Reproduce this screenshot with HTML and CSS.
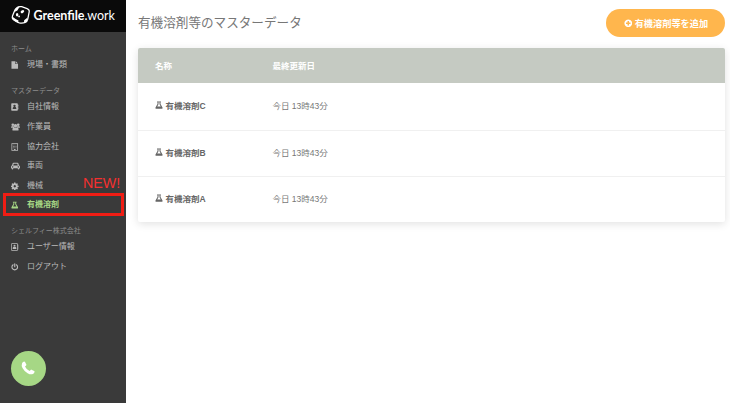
FILE: index.html
```
<!DOCTYPE html>
<html lang="ja">
<head>
	<meta charset="utf-8">
	<title>有機溶剤等のマスターデータ</title>
	<link rel="stylesheet" href="styles.css">
</head>
<body>
	<!-- shared icons -->
	<svg class="sprite">
		<symbol id="flask" viewBox="0 0 16 16">
			<path fill-rule="evenodd" d="M4 1h8v1.500h-1v3.500l4 7q1 2.500-1.300 2.500H2.300Q0 15.500 1 13l4-7V2.500H4zM7 2.500v4L4.500 11h7L9 6.500v-4z"/>
		</symbol>
	</svg>

	<div class="page">
		<div class="sidebar">
			<div class="logo">
				<svg class="logo-mark" viewBox="0 0 20 20">
					<path d="M6 2.500Q8 .8 11 1.500l5.500 2q2.500 1 2.200 3l-1.500 7.800q-.5 2.500-2.500 3.200-3 1.200-6.200.5-4-1.200-6.500-3.500Q.8 13.300 1.500 11L4 5q.7-1.500 2-2.500z" fill="none" stroke="#fff" stroke-width="1.300"/>
					<path d="M5 3l4-1.700L6.500 5.500 3.500 7zM1.200 11.500q3 2.500 6.500 4.200l-.5 2.300-4.700-3zM13.500 15.500l3.500-3-.7 4-3 1.500z" fill="#fff"/>
					<ellipse cx="6.300" cy="9.800" rx="1.300" ry="1.800" fill="#fff"/>
					<ellipse cx="11.700" cy="6.600" rx="2" ry="1.400" fill="#fff" transform="rotate(-35 11.700 6.600)"/>
					<circle cx="8.300" cy="11.500" r=".9" fill="#fff"/>
				</svg>
				<span class="logo-text"><b>Greenfile</b>.work</span>
			</div>

			<div class="menu">
				<p class="menu-label">ホーム</p>
				<a class="item">
					<svg viewBox="0 0 16 16"><path d="M1 0h8v6h6v10H1zM10.200 0L15 4.800h-4.800z"/></svg>
					<span>現場・書類</span>
				</a>

				<p class="menu-label">マスターデータ</p>
				<a class="item">
					<svg viewBox="0 0 16 16"><path fill-rule="evenodd" d="M2 0h11q1.500 0 1.500 1.500V3H16v2.500h-1.500v1.200H16v2.500h-1.500v1.200H16V13h-1.500v1.500q0 1.500-1.500 1.500H2Q.5 16 .5 14.500v-13Q.5 0 2 0zM7.500 3a2.300 2.300 0 0 0-1.500 4.200Q3.500 8 3.500 12h8q0-4-2.500-4.800A2.300 2.300 0 0 0 7.500 3z"/></svg>
					<span>自社情報</span>
				</a>
				<a class="item">
					<svg class="wide" viewBox="0 0 20 16"><circle cx="4" cy="3" r="3"/><circle cx="16" cy="3" r="3"/><circle cx="10" cy="5.300" r="3.800"/><path d="M0 9.500q0-4 2.500-4 2 1 3.500.5.300 2 1.500 3.500zM20 9.500q0-4-2.500-4-2 1-3.500.5-.3 2-1.500 3.500zM3 14q0-5 3.800-5.400Q10 10.500 13.200 8.600 17 9 17 14q0 2-2 2H5q-2 0-2-2z"/></svg>
					<span>作業員</span>
				</a>
				<a class="item">
					<svg viewBox="0 0 16 16"><path fill-rule="evenodd" d="M1 0h14v16H1zM2.700 1.500v13h3.500V12h3.600v2.500h3.500v-13z"/><path d="M4.500 3H6v1.400H4.500zM7.300 3h1.500v1.400H7.300zM10 3h1.500v1.400H10zM4.500 6H6v1.400H4.500zM7.300 6h1.500v1.400H7.300zM10 6h1.500v1.400H10zM4.500 9H6v1.400H4.500zM7.300 9h1.500v1.400H7.300zM10 9h1.500v1.400H10z"/></svg>
					<span>協力会社</span>
				</a>
				<a class="item">
					<svg class="wide" viewBox="0 0 20 16"><path fill-rule="evenodd" d="M5.500 1h9Q16 1 16.500 2.500L17.700 7Q20 7 20 9.500V13h-1.500v1a1.500 1.500 0 0 1-3.500 0v-1H5v1a1.500 1.500 0 0 1-3.500 0v-1H0V9.500Q0 7 2.300 7l1.200-4.500Q4 1 5.500 1zM6 3L5 7h10l-1-4zM3.700 8.500a1.500 1.500 0 1 0 .1 0zM16.200 8.500a1.500 1.500 0 1 0 .1 0z"/></svg>
					<span>車両</span>
				</a>
				<a class="item">
					<svg viewBox="0 0 16 16"><path fill-rule="evenodd" d="M6.500.5h3l.4 2.300 1.100.5 1.900-1.400 2 2-1.400 1.900.5 1.100 2.300.4v2.900l-2.300.4-.5 1.100 1.400 1.900-2 2-1.900-1.400-1.100.5-.4 2.300h-3l-.4-2.300-1.100-.5-1.900 1.400-2-2 1.400-1.900-.5-1.100-2.300-.4V7.300L2 6.900l.5-1.100-1.400-1.900 2-2L5 3.300l1.100-.5zM8 6a2.500 2.500 0 1 0 .1 0z"/></svg>
					<span>機械</span>
				</a>
				<a class="item active">
					<svg><use href="#flask"/></svg>
					<span>有機溶剤</span>
					<span class="new">NEW!</span>
				</a>

				<p class="menu-label">シェルフィー株式会社</p>
				<a class="item">
					<svg viewBox="0 0 16 16"><path fill-rule="evenodd" d="M1.500 0h12Q14.500 0 14.500 1v2H16v2h-1.500v2H16v2h-1.500v2H16v2h-1.500v2q0 1-1 1h-12q-1 0-1-1V1q0-1 1-1zM2 1.500v13h11v-13z"/><circle cx="7.500" cy="5.500" r="2.200"/><path d="M3.500 12q0-4.500 2.500-4.500 1.500 1 3 0 2.500 0 2.500 4.500z"/></svg>
					<span>ユーザー情報</span>
				</a>
				<a class="item">
					<svg viewBox="0 0 16 16"><path d="M4.500 3.300a6 6 0 1 0 7 0M8 1v6.500" fill="none" stroke="currentColor" stroke-width="2.400" stroke-linecap="round"/></svg>
					<span>ログアウト</span>
				</a>
			</div>

			<button class="phone">
				<svg viewBox="0 0 16 16"><path d="M1.200 2.500Q2 .8 3.800.5q.5 0 .8.500l1.500 3q.3.600-.3 1L4.600 6.200q1.500 3.500 5.200 5.200l1.200-1.200q.4-.6 1-.3l3 1.500q.6.300.5.800-.3 2-2 2.700-2.500 1-6-1Q3.500 11.500 1.700 8 .2 5 1.200 2.500z"/></svg>
			</button>
		</div>

		<div class="content">
			<div class="heading">
				<h1>有機溶剤等のマスターデータ</h1>
				<button class="add-btn">
					<svg viewBox="0 0 16 16"><path fill-rule="evenodd" d="M8 .8a7.200 7.200 0 1 0 .1 0zM6.600 3.800h2.800v2.800h2.800v2.800H9.400v2.800H6.600V9.400H3.800V6.600h2.800z"/></svg>
					有機溶剤等を追加
				</button>
			</div>

			<div class="table">
				<div class="row head"><span>名称</span><span>最終更新日</span></div>
				<div class="row">
					<span class="name"><svg><use href="#flask"/></svg>有機溶剤C</span>
					<span>今日 13時43分</span>
				</div>
				<div class="row">
					<span class="name"><svg><use href="#flask"/></svg>有機溶剤B</span>
					<span>今日 13時43分</span>
				</div>
				<div class="row">
					<span class="name"><svg><use href="#flask"/></svg>有機溶剤A</span>
					<span>今日 13時43分</span>
				</div>
			</div>
		</div>
	</div>
</body>
</html>
```
FILE: styles.css
```
*, *::after {
	box-sizing: border-box;
}
body {
	margin: 0;
	background: #fff;
	color: #777;
	font-family: "Liberation Sans", "Noto Sans CJK JP", sans-serif;
	font-size: 8.5px;
}
svg {
	fill: currentColor;
	flex-shrink: 0;
}
button {
	border: none;
	padding: 0;
	font-family: inherit;
	cursor: pointer;
}
.sprite {
	display: none;
}
.page {
	display: flex;
	height: 403px;
	overflow: hidden;
}

/* sidebar */
.sidebar {
	display: flex;
	flex-direction: column;
	width: 126px;
	background: #3a3a3a;
	color: #bbb;
}
.logo {
	display: flex;
	align-items: center;
	gap: 3px;
	height: 32px;
	padding: 0 0 3px 11px;
	background: #0a0a0a;
	color: #fff;
}
.logo-mark {
	width: 19.5px;
	height: 20px;
}
.logo-text {
	padding-top: 2px;
	font-family: Lato, sans-serif;
	font-size: 12.5px;
	line-height: 16px;
	white-space: nowrap;
}
.menu {
	padding-top: 10px;
}
.menu-label {
	height: 13.2px;
	margin: 0;
	padding-left: 11px;
	color: #8c8c8c;
	font-size: 7px;
	line-height: 13px;
}
.item + .menu-label {
	margin-top: 9.2px;
}
.item {
	display: flex;
	align-items: center;
	position: relative;
	height: 19.6px;
	padding: 1px 0 0 11px;
	font-size: 8px;
	line-height: 12px;
}
.item svg {
	width: 7.5px;
	height: 8px;
	margin-right: 8.5px;
}
.item svg.wide {
	width: 9px;
	margin-right: 7px;
}
.active {
	color: #a6d785;
	font-weight: bold;
}
.active::after {
	content: "";
	position: absolute;
	top: -2px;
	left: 3px;
	width: 121px;
	height: 23px;
	border: 3px solid #f01d14;
}
.new {
	position: absolute;
	top: -20px;
	left: 83px;
	color: #f4302f;
	font-size: 14.3px;
	font-weight: normal;
	line-height: 16px;
}
.phone {
	display: flex;
	align-items: center;
	justify-content: center;
	width: 35px;
	height: 35px;
	margin: auto 0 17px 11px;
	border-radius: 50%;
	background: #a6d785;
	color: #fff;
}
.phone svg {
	width: 14px;
	height: 14px;
	margin: 0 1px 2px 0;
}

/* content */
.content {
	flex: 1;
	padding: 9px 4.6px 0 12px;
}
.heading {
	display: flex;
	justify-content: space-between;
	height: 39.4px;
}
h1 {
	margin: 0;
	color: #777;
	font-size: 12.6px;
	font-weight: normal;
	line-height: 28px;
}
.add-btn {
	display: flex;
	align-items: center;
	justify-content: center;
	gap: 2.5px;
	width: 119px;
	height: 28px;
	border-radius: 14px;
	background: #ffb64d;
	color: #fff;
	font-size: 9.2px;
	font-weight: bold;
}
.add-btn svg {
	width: 8.5px;
	height: 8.5px;
}
.table {
	border-radius: 2px;
	box-shadow: 0 2px 9px rgba(0, 0, 0, 0.12);
}
.row {
	display: grid;
	grid-template-columns: 117.5px 1fr;
	align-items: center;
	height: 46.2px;
	padding: 0 0 2px 17px;
	border-top: 1px solid #f0f0f0;
}
.head {
	height: 35px;
	padding-bottom: 1px;
	border: none;
	border-radius: 2px 2px 0 0;
	background: #c5cac2;
	color: #fff;
	font-weight: bold;
}
.head + .row {
	border-top: none;
}
.name {
	display: flex;
	align-items: center;
	gap: 2.5px;
	color: #666;
	font-weight: bold;
}
.name svg {
	width: 8px;
	height: 8px;
}
```
